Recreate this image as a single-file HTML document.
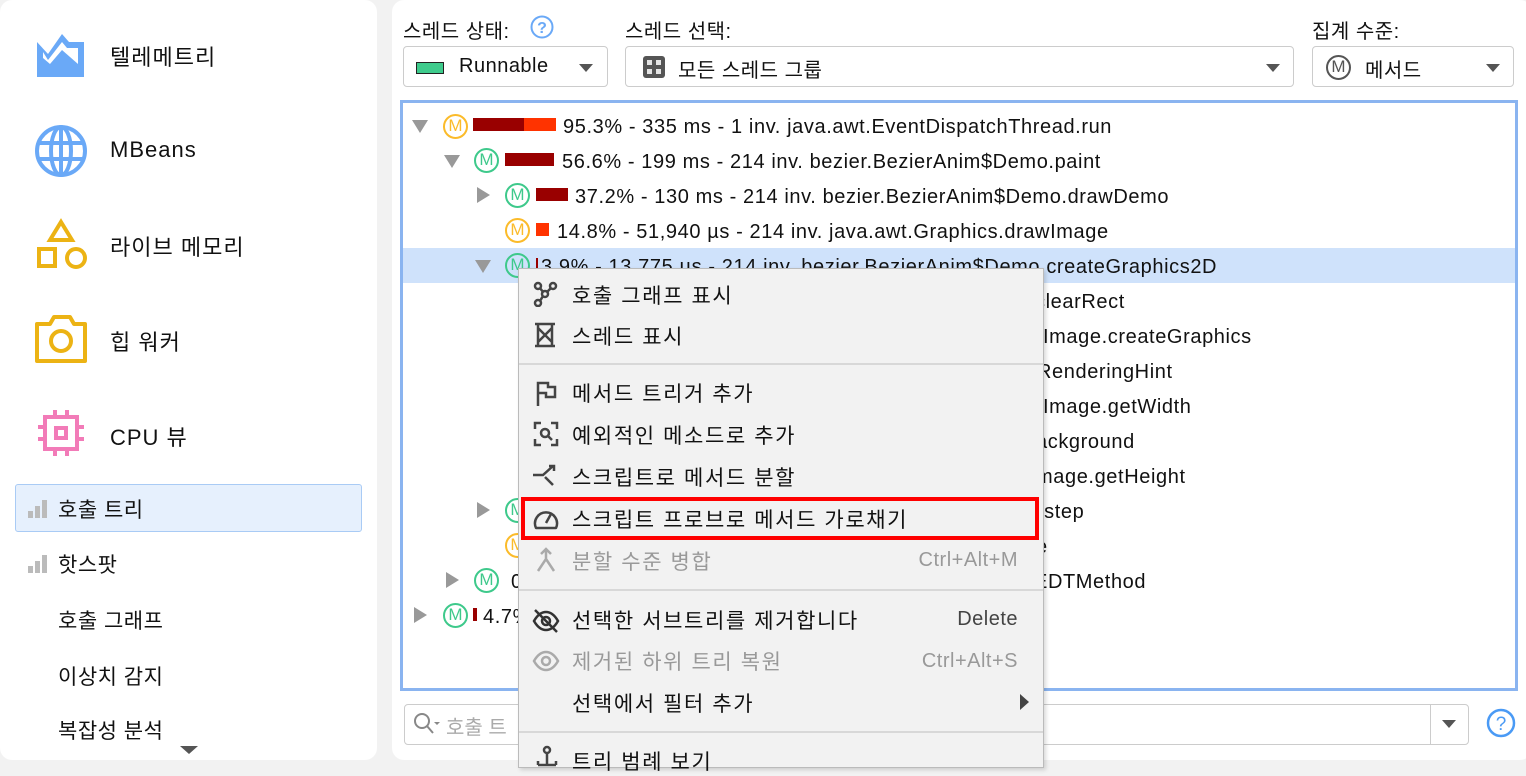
<!DOCTYPE html>
<html><head><meta charset="utf-8"><style>
*{margin:0;padding:0;box-sizing:border-box}
body{width:1526px;height:763px;background:#f2f2f2;font-family:"Liberation Sans","Noto Sans CJK KR",sans-serif;color:#111;position:relative;overflow:hidden}
.a{position:absolute;white-space:nowrap}
.lp{left:0;top:0;width:377px;height:760px;background:#fff;border-radius:12px}
.rp{left:392px;top:0;width:1140px;height:760px;background:#fff;border-radius:12px}
.nav{font-size:22px;left:110px;letter-spacing:1px}
.sub{font-size:21px;left:58px;letter-spacing:.5px}
.lbl{font-size:20px;letter-spacing:.5px}
.combo{border:1px solid #ccc;border-radius:4px;background:#fff;height:41px;top:46px}
.tri{width:0;height:0;border-left:7px solid transparent;border-right:7px solid transparent;border-top:8px solid #555}
.tree{left:400px;top:100px;width:1118px;height:591px;border:3px solid #8ab4f0;background:#fff}
.row{font-size:20px;height:35px;line-height:39px;letter-spacing:.6px}
.tg{width:0;height:0}
.tgd{border-left:8px solid transparent;border-right:8px solid transparent;border-top:13px solid #999}
.tgr{border-top:8px solid transparent;border-bottom:8px solid transparent;border-left:13px solid #999}
.m{width:25px;height:25px;border-radius:50%;border:2.5px solid;font-size:17px;line-height:20px;text-align:center}
.mg{border-color:#3ec98b;color:#3ec98b}.mo{border-color:#fbbb2a;color:#fbbb2a}
.menu{left:518px;top:268px;width:526px;height:500px;background:#f2f2f2;border:1px solid #bbb;box-shadow:2px 2px 4px rgba(0,0,0,.15)}
.mi{font-size:21px;left:53px;letter-spacing:1.6px}
.sep{left:0;width:524px;height:2px;background:#d8d8d8}
.dis{color:#999}
.sc{font-size:20px;right:25px;letter-spacing:.5px}
</style></head><body>
<div class="a lp"></div>
<div class="a rp"></div>

<svg class="a" style="left:36px;top:32px" width="49" height="45" viewBox="0 0 49 45"><path d="M1 10 L12 22 L26 2 L33 10 L48 10 L48 45 L1 45 Z" fill="#6aa9f7"/><path d="M7 20 L12 28 L26 10 L31 16 L42 16 L42 32 L26 18 L14 32 L7 26Z" fill="#fff"/></svg>
<div class="a nav" style="top:40px">텔레메트리</div>
<svg class="a" style="left:34px;top:124px" width="54" height="54" viewBox="0 0 54 54" fill="none" stroke="#6aa9f7" stroke-width="4"><circle cx="27" cy="27" r="24"/><ellipse cx="27" cy="27" rx="10" ry="24"/><path d="M3 19H51M3 35H51M27 3V51"/></svg>
<div class="a nav" style="top:137px">MBeans</div>
<svg class="a" style="left:36px;top:218px" width="52" height="52" viewBox="0 0 52 52" fill="none" stroke="#ecb314" stroke-width="4"><path d="M25 4 L36 22 L14 22Z"/><rect x="3" y="31" width="16" height="17"/><circle cx="40" cy="40" r="9"/></svg>
<div class="a nav" style="top:230px">라이브 메모리</div>
<svg class="a" style="left:34px;top:314px" width="54" height="50" viewBox="0 0 54 50" fill="none" stroke="#ecb314" stroke-width="4"><path d="M3 10 H16 L20 3 H36 L40 10 H51 V47 H3Z" stroke-linejoin="round"/><circle cx="27" cy="27" r="10"/></svg>
<div class="a nav" style="top:325px">힙 워커</div>
<svg class="a" style="left:36px;top:408px" width="50" height="50" viewBox="0 0 50 50" fill="none" stroke="#f27bb8" stroke-width="4"><rect x="9" y="9" width="32" height="32"/><rect x="20" y="20" width="10" height="10"/><path d="M19 2V9M31 2V9M19 41V48M31 41V48M2 19H9M2 31H9M41 19H48M41 31H48"/></svg>
<div class="a nav" style="top:420px">CPU 뷰</div>
<div class="a" style="left:15px;top:484px;width:347px;height:48px;background:#e6f0fd;border:1.5px solid #a9cbf5;border-radius:3px"></div>
<svg class="a" style="left:28px;top:500px" width="19" height="18"><rect x="0" y="11" width="5" height="7" fill="#bbb"/><rect x="7" y="6" width="5" height="12" fill="#bbb"/><rect x="14" y="0" width="5" height="18" fill="#bbb"/></svg>
<div class="a sub" style="top:494px">호출 트리</div>
<svg class="a" style="left:28px;top:555px" width="19" height="18"><rect x="0" y="11" width="5" height="7" fill="#bbb"/><rect x="7" y="6" width="5" height="12" fill="#bbb"/><rect x="14" y="0" width="5" height="18" fill="#bbb"/></svg>
<div class="a sub" style="top:549px">핫스팟</div>
<div class="a sub" style="top:605px">호출 그래프</div>
<div class="a sub" style="top:661px">이상치 감지</div>
<div class="a" style="left:0;top:715px;width:376px;height:28px;overflow:hidden"><div class="a sub" style="top:0">복잡성 분석</div></div>
<div class="a tri" style="left:180px;top:746px;border-left-width:9px;border-right-width:9px;border-top-width:8px"></div>

<div class="a lbl" style="left:403px;top:15px">스레드 상태:</div>
<svg class="a" style="left:530px;top:15px" width="24" height="24" viewBox="0 0 24 24"><circle cx="12" cy="12" r="10.5" fill="none" stroke="#6aa9f7" stroke-width="2"/><text x="12" y="18" font-size="16" font-weight="bold" text-anchor="middle" fill="#6aa9f7" font-family="Liberation Sans">?</text></svg>
<div class="a lbl" style="left:625px;top:15px">스레드 선택:</div>
<div class="a lbl" style="left:1312px;top:15px">집계 수준:</div>
<div class="a combo" style="left:403px;width:205px"></div>
<div class="a" style="left:416px;top:62px;width:28px;height:12px;background:#3ecb8c;border:1px solid #222"></div>
<div class="a lbl" style="left:459px;top:55px">Runnable</div>
<div class="a tri" style="left:579px;top:64px"></div>
<div class="a combo" style="left:625px;width:669px"></div>
<svg class="a" style="left:643px;top:56px" width="22" height="22" viewBox="0 0 22 22"><rect x="0" y="0" width="22" height="22" rx="3" fill="#555"/><rect x="4" y="4" width="5" height="5" fill="#fff" opacity=".85"/><rect x="13" y="4" width="5" height="5" fill="#fff" opacity=".85"/><rect x="4" y="13" width="5" height="5" fill="#fff" opacity=".85"/><rect x="13" y="13" width="5" height="5" fill="#fff" opacity=".85"/></svg>
<div class="a lbl" style="left:678px;top:54px">모든 스레드 그룹</div>
<div class="a tri" style="left:1266px;top:64px"></div>
<div class="a combo" style="left:1312px;width:202px"></div>
<div class="a m" style="left:1326px;top:55px;border-color:#555;color:#555">M</div>
<div class="a lbl" style="left:1365px;top:54px">메서드</div>
<div class="a tri" style="left:1486px;top:64px"></div>

<div class="a tree"></div>
<div class="a" style="left:403px;top:248px;width:1112px;height:35px;background:#cfe2fb"></div>

<div class="a tg tgd" style="left:412px;top:120px"></div>
<div class="a m mo" style="left:443px;top:114px">M</div>
<div class="a" style="left:473px;top:118px;width:51px;height:13px;background:#990000"></div><div class="a" style="left:524px;top:118px;width:32px;height:13px;background:#ff3300"></div>
<div class="a row" style="left:563px;top:108px">95.3% - 335 ms - 1 inv. java.awt.EventDispatchThread.run</div>

<div class="a tg tgd" style="left:444px;top:155px"></div>
<div class="a m mg" style="left:474px;top:148px">M</div>
<div class="a" style="left:505px;top:153px;width:49px;height:13px;background:#990000"></div>
<div class="a row" style="left:562px;top:143px">56.6% - 199 ms - 214 inv. bezier.BezierAnim$Demo.paint</div>

<div class="a tg tgr" style="left:477px;top:187px"></div>
<div class="a m mg" style="left:505px;top:183px">M</div>
<div class="a" style="left:536px;top:188px;width:32px;height:13px;background:#990000"></div>
<div class="a row" style="left:575px;top:178px">37.2% - 130 ms - 214 inv. bezier.BezierAnim$Demo.drawDemo</div>

<div class="a m mo" style="left:505px;top:218px">M</div>
<div class="a" style="left:536px;top:223px;width:13px;height:13px;background:#ff3300"></div>
<div class="a row" style="left:557px;top:213px">14.8% - 51,940 µs - 214 inv. java.awt.Graphics.drawImage</div>

<div class="a tg tgd" style="left:475px;top:260px"></div>
<div class="a m mg" style="left:505px;top:253px">M</div>
<div class="a" style="left:536px;top:258px;width:2px;height:13px;background:#990000"></div>
<div class="a row" style="left:541px;top:248px">3.9% - 13,775 µs - 214 inv. bezier.BezierAnim$Demo.createGraphics2D</div>

<div class="a row" style="left:1035px;top:283px">clearRect</div>
<div class="a row" style="left:1043px;top:318px">Image.createGraphics</div>
<div class="a row" style="left:1037px;top:353px">RenderingHint</div>
<div class="a row" style="left:1043px;top:388px">Image.getWidth</div>
<div class="a row" style="left:1036px;top:423px">ackground</div>
<div class="a row" style="left:1036px;top:458px">mage.getHeight</div>
<div class="a tg tgr" style="left:477px;top:502px"></div>
<div class="a m mg" style="left:505px;top:498px">M</div>
<div class="a row" style="left:1038px;top:493px">.step</div>
<div class="a m mo" style="left:505px;top:533px">M</div>
<div class="a row" style="left:1036px;top:528px">e</div>
<div class="a tg tgr" style="left:446px;top:572px"></div>
<div class="a m mg" style="left:474px;top:568px">M</div>
<div class="a row" style="left:511px;top:563px">0</div>
<div class="a row" style="left:1034px;top:563px">EDTMethod</div>
<div class="a tg tgr" style="left:414px;top:607px"></div>
<div class="a m mg" style="left:443px;top:603px">M</div>
<div class="a" style="left:473px;top:608px;width:4px;height:13px;background:#990000"></div>
<div class="a row" style="left:483px;top:598px">4.7%</div>

<div class="a" style="left:404px;top:704px;width:1065px;height:41px;border:1px solid #ccc;border-radius:4px;background:#fff"></div>
<div class="a" style="left:1430px;top:705px;width:1px;height:39px;background:#ccc"></div>
<div class="a tri" style="left:1442px;top:720px"></div>
<svg class="a" style="left:412px;top:711px" width="30" height="26" viewBox="0 0 30 26" fill="none" stroke="#888" stroke-width="2"><circle cx="10" cy="10" r="7"/><path d="M15 15 L21 22"/><path d="M22 11 L28 11 L25 14Z" fill="#888" stroke="none"/></svg>
<div class="a" style="left:446px;top:711px;font-size:20px;color:#aaa">호출 트</div>
<svg class="a" style="left:1486px;top:708px" width="30" height="30" viewBox="0 0 30 30"><circle cx="15" cy="15" r="13" fill="none" stroke="#4a9af5" stroke-width="2.5"/><text x="15" y="22" font-size="19" text-anchor="middle" fill="#4a9af5" font-family="Liberation Sans">?</text></svg>

<div class="a menu">
<svg class="a" style="left:14px;top:12px" width="26" height="26" viewBox="0 0 26 26" fill="none" stroke="#444" stroke-width="2.5"><circle cx="5" cy="5" r="3"/><circle cx="20" cy="5" r="3"/><circle cx="12" cy="13" r="3"/><circle cx="5" cy="22" r="3"/><path d="M7 7L10 11M18 7L14 11M10 15L7 20"/></svg>
<div class="a mi" style="top:11px">호출 그래프 표시</div>
<svg class="a" style="left:14px;top:53px" width="24" height="26" viewBox="0 0 24 26" fill="none" stroke="#444" stroke-width="2.5"><path d="M2 2H22M2 24H22M5 2V24M19 2V24M5 6L19 20M5 20L19 6"/></svg>
<div class="a mi" style="top:52px">스레드 표시</div>
<div class="a sep" style="top:94px"></div>
<svg class="a" style="left:16px;top:111px" width="24" height="26" viewBox="0 0 24 26" fill="none" stroke="#444" stroke-width="2.5"><path d="M3 26V3H13V7H20V17H11V13H3"/></svg>
<div class="a mi" style="top:109px">메서드 트리거 추가</div>
<svg class="a" style="left:14px;top:152px" width="26" height="26" viewBox="0 0 26 26" fill="none" stroke="#444" stroke-width="2.5"><path d="M2 8V2H8M18 2H24V8M24 18V24H18M8 24H2V18"/><circle cx="12" cy="12" r="4"/><path d="M15 15L19 19"/></svg>
<div class="a mi" style="top:151px">예외적인 메소드로 추가</div>
<svg class="a" style="left:14px;top:194px" width="26" height="26" viewBox="0 0 26 26" fill="none" stroke="#444" stroke-width="2.5"><path d="M0 12H10L20 3M16 3H21V8M12 14L20 22"/></svg>
<div class="a mi" style="top:193px">스크립트로 메서드 분할</div>
<div class="a" style="left:2px;top:228px;width:518px;height:43px;border:4px solid #f00"></div>
<svg class="a" style="left:14px;top:236px" width="26" height="26" viewBox="0 0 26 26" fill="none" stroke="#444" stroke-width="2.5"><path d="M3 23A11 11 0 1 1 23 23Z" stroke-linejoin="round"/><path d="M13 18L18 9"/></svg>
<div class="a mi" style="top:235px">스크립트 프로브로 메서드 가로채기</div>
<svg class="a" style="left:16px;top:278px" width="22" height="26" viewBox="0 0 22 26" fill="none" stroke="#aaa" stroke-width="2.5"><path d="M11 2V12L3 24M11 12L19 24M6 7L11 2L16 7"/></svg>
<div class="a mi dis" style="top:277px">분할 수준 병합</div>
<div class="a sc dis" style="top:280px">Ctrl+Alt+M</div>
<div class="a sep" style="top:320px"></div>
<svg class="a" style="left:13px;top:338px" width="28" height="28" viewBox="0 0 28 28" fill="none" stroke="#333" stroke-width="2.5"><path d="M2 14C6 7 10 5 14 5S22 7 26 14C22 21 18 23 14 23S6 21 2 14Z"/><circle cx="14" cy="14" r="4"/><path d="M3 3L25 25"/></svg>
<div class="a mi" style="top:336px">선택한 서브트리를 제거합니다</div>
<div class="a sc" style="top:339px;color:#444">Delete</div>
<svg class="a" style="left:13px;top:380px" width="28" height="24" viewBox="0 0 28 24" fill="none" stroke="#aaa" stroke-width="2.5"><path d="M2 12C6 5 10 3 14 3S22 5 26 12C22 19 18 21 14 21S6 19 2 12Z"/><circle cx="14" cy="12" r="4"/></svg>
<div class="a mi dis" style="top:377px">제거된 하위 트리 복원</div>
<div class="a sc dis" style="top:381px">Ctrl+Alt+S</div>
<div class="a mi" style="top:419px">선택에서 필터 추가</div>
<div class="a" style="left:501px;top:425px;width:0;height:0;border-top:8px solid transparent;border-bottom:8px solid transparent;border-left:9px solid #444"></div>
<div class="a sep" style="top:462px"></div>
<svg class="a" style="left:16px;top:476px" width="24" height="26" viewBox="0 0 24 26" fill="none" stroke="#444" stroke-width="2.5"><circle cx="12" cy="5" r="3"/><path d="M12 8V20M3 20H21M3 16V20M21 16V20"/></svg>
<div class="a mi" style="top:477px">트리 범례 보기</div>
</div>
</body></html>
